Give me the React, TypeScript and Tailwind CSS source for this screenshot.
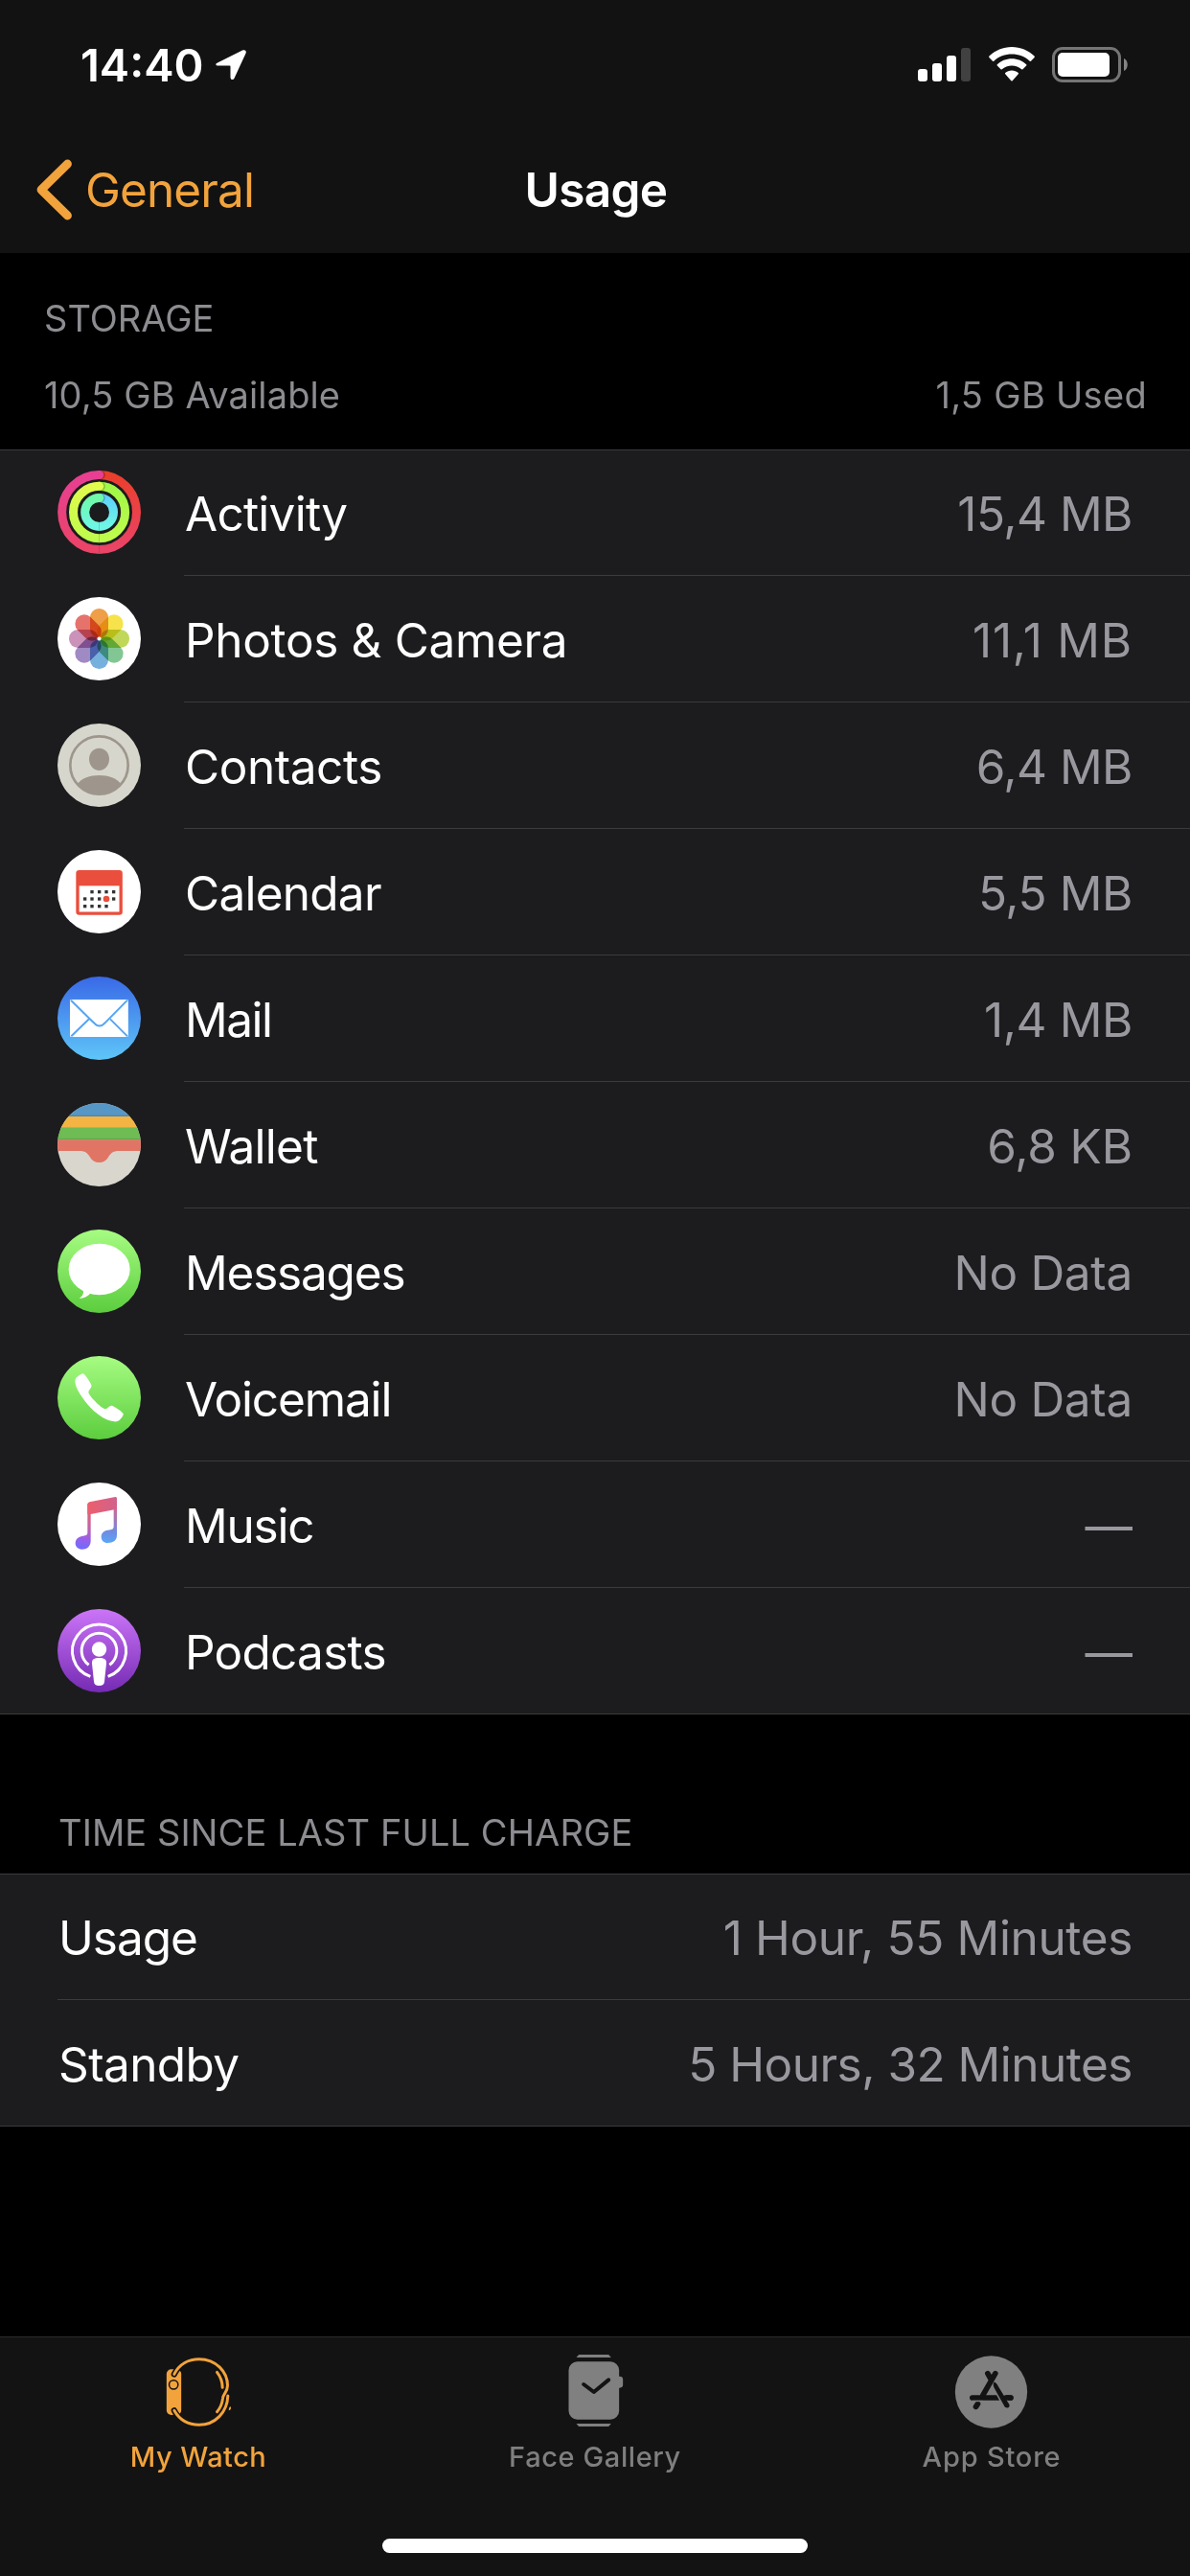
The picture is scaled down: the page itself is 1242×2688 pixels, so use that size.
import type { ReactNode } from "react";

function ActivityIcon() {
  return (
    <svg viewBox="0 0 261 261" className="size-full">
      <defs>
        <linearGradient id="moveR" x1="0" y1="0" x2="0" y2="1">
          <stop offset="0" stopColor="#ea3f2c" />
          <stop offset="1" stopColor="#ea4467" />
        </linearGradient>
        <linearGradient id="moveL" x1="0" y1="0" x2="0" y2="1">
          <stop offset="0" stopColor="#e83f93" />
          <stop offset="1" stopColor="#ea4467" />
        </linearGradient>
        <linearGradient id="exR" x1="0" y1="0" x2="0" y2="1">
          <stop offset="0" stopColor="#a0f747" />
          <stop offset="1" stopColor="#bffb4d" />
        </linearGradient>
        <linearGradient id="exL" x1="0" y1="0" x2="0" y2="1">
          <stop offset="0" stopColor="#e1fa4d" />
          <stop offset="1" stopColor="#bffb4d" />
        </linearGradient>
        <linearGradient id="stR" x1="0" y1="0" x2="0" y2="1">
          <stop offset="0" stopColor="#5fd3f9" />
          <stop offset="1" stopColor="#6ff7e6" />
        </linearGradient>
        <linearGradient id="stL" x1="0" y1="0" x2="0" y2="1">
          <stop offset="0" stopColor="#6ff9a8" />
          <stop offset="1" stopColor="#6ff7e6" />
        </linearGradient>
      </defs>
      <circle cx="130.5" cy="130.5" r="130" fill="#1b1b1d" />
      <g fill="none" strokeWidth="27">
        <path d="M130.5 13.5A117 117 0 0 1 130.5 247.5" stroke="url(#moveR)" />
        <path d="M131 247.5A117 117 0 0 1 131 13.5" stroke="url(#moveL)" />
        <path d="M130.5 49A81.5 81.5 0 0 1 130.5 212" stroke="url(#exR)" />
        <path d="M131 212A81.5 81.5 0 0 1 131 49" stroke="url(#exL)" />
        <path d="M130.5 85.5A45 45 0 0 1 130.5 175.5" stroke="url(#stR)" />
        <path d="M131 175.5A45 45 0 0 1 131 85.5" stroke="url(#stL)" />
      </g>
      <circle cx="136" cy="14" r="13.5" fill="#000" opacity=".25" />
      <circle cx="131" cy="13.5" r="13.5" fill="#e83f93" />
      <circle cx="136" cy="49.5" r="13.5" fill="#000" opacity=".2" />
      <circle cx="131" cy="49" r="13.5" fill="#e1fa4d" />
      <circle cx="136" cy="86" r="13.5" fill="#000" opacity=".2" />
      <circle cx="131" cy="85.5" r="13.5" fill="#6ff9a8" />
    </svg>
  );
}

const petals = ["#ee9f47", "#f6e24a", "#c0d75a", "#82c793", "#76b1de", "#a08ac4", "#cb92ba", "#e5736c"];

function PhotosIcon() {
  return (
    <svg viewBox="0 0 261 261" className="size-full">
      <circle cx="130.5" cy="130.5" r="130.5" fill="#fff" />
      <g className="isolate">
        {petals.map((color, i) => (
          <rect
            key={color}
            x="102"
            y="36"
            width="57"
            height="92"
            rx="28"
            fill={color}
            transform={`rotate(${i * 45} 130.5 130.5)`}
            className="mix-blend-multiply"
          />
        ))}
      </g>
      <circle cx="130.5" cy="130.5" r="6" fill="#fff" />
    </svg>
  );
}

function ContactsIcon() {
  return (
    <svg viewBox="0 0 261 261" className="size-full">
      <clipPath id="contact">
        <circle cx="130.5" cy="130.5" r="92" />
      </clipPath>
      <circle cx="130.5" cy="130.5" r="130.5" fill="#d6d6cc" />
      <circle cx="130.5" cy="130.5" r="90.5" fill="none" stroke="#9e968c" strokeWidth="8" />
      <path
        d="M130.5 77C149 77 162 92 162 111C162 131 148 147 130.5 147C113 147 99 131 99 111C99 92 112 77 130.5 77Z"
        fill="#9e968c"
      />
      <path
        d="M60 192C76 170 102 162 130.5 162C159 162 185 170 201 192V240H60Z"
        fill="#9e968c"
        clipPath="url(#contact)"
      />
    </svg>
  );
}

const calendarDots = [
  [108, 131], [131, 131], [153, 131], [176, 131],
  [86, 153], [108, 153], [131, 153], [176, 153],
  [86, 176], [108, 176], [131, 176], [153, 176],
];

function CalendarIcon() {
  return (
    <svg viewBox="0 0 261 261" className="size-full">
      <circle cx="130.5" cy="130.5" r="130.5" fill="#fff" />
      <rect x="63" y="68" width="135.5" height="130.5" rx="5" fill="none" stroke="#ea4e3d" strokeWidth="10" />
      <rect x="60" y="66" width="141" height="46" fill="#ea4e3d" />
      {calendarDots.map(([x, y]) => (
        <rect key={`${x}-${y}`} x={x - 5} y={y - 5} width="10" height="10" fill="#333" />
      ))}
      <circle cx="153" cy="153" r="10" fill="#ea4e3d" />
    </svg>
  );
}

function MailIcon() {
  return (
    <svg viewBox="0 0 261 261" className="size-full">
      <linearGradient id="mail" x1="0" y1="0" x2="0" y2="1">
        <stop offset="0" stopColor="#3969e7" />
        <stop offset="1" stopColor="#5fc6f8" />
      </linearGradient>
      <circle cx="130.5" cy="130.5" r="130.5" fill="url(#mail)" />
      <rect x="39" y="72" width="182.5" height="117" rx="4" fill="#fff" />
      <g fill="none" stroke="#56a5f2" strokeWidth="6">
        <path d="M42 74L112 143Q131 166 151 143L219 74" />
        <path d="M43 187L99 133M219 187L165 133" />
      </g>
    </svg>
  );
}

function WalletIcon() {
  return (
    <svg viewBox="0 0 261 261" className="size-full">
      <clipPath id="wallet">
        <circle cx="130.5" cy="130.5" r="130.5" />
      </clipPath>
      <g clipPath="url(#wallet)">
        <rect width="261" height="261" fill="#d9d6ce" />
        <rect width="261" height="42" fill="#5797c6" />
        <rect y="38" width="261" height="4" fill="#4f87ae" />
        <rect y="42" width="261" height="36" fill="#f3b443" />
        <rect y="75" width="261" height="3" fill="#d9a33c" />
        <rect y="78" width="261" height="37" fill="#6fbb54" />
        <rect y="111" width="261" height="4" fill="#65a64c" />
        <path
          d="M0 115H261V150H192C174 150 168 156 160 168C153 180 144 186 130.5 186C117 186 108 180 101 168C93 156 87 150 69 150H0Z"
          fill="#e17565"
        />
      </g>
    </svg>
  );
}

function MessagesIcon() {
  return (
    <svg viewBox="0 0 261 261" className="size-full">
      <linearGradient id="msg" x1="0" y1="0" x2="0" y2="1">
        <stop offset="0" stopColor="#a6fc82" />
        <stop offset="1" stopColor="#5ccd3e" />
      </linearGradient>
      <circle cx="130.5" cy="130.5" r="130.5" fill="url(#msg)" />
      <ellipse cx="131" cy="124.5" rx="96" ry="80" fill="#fff" />
      <path d="M80 187C84 200 78 209 68 216C82 216 94 210 104 199Z" fill="#fff" />
    </svg>
  );
}

function VoicemailIcon() {
  return (
    <svg viewBox="0 0 261 261" className="size-full">
      <linearGradient id="phone" x1="0" y1="0" x2="0" y2="1">
        <stop offset="0" stopColor="#a6fc82" />
        <stop offset="1" stopColor="#5ccd3e" />
      </linearGradient>
      <circle cx="130.5" cy="130.5" r="130.5" fill="url(#phone)" />
      <path
        d="M60 67C66 61 73 57 79 55C85 55 101 80 106 90C109 100 97 105 97 114C100 126 134 160 147 165C157 167 161 154 171 155C182 160 201 173 206 180C208 186 196 202 186 205C160 207 128 187 104 162C80 135 57 104 55 80C55 74 57 70 60 67Z"
        fill="#fff"
      />
    </svg>
  );
}

function MusicIcon() {
  return (
    <svg viewBox="0 0 261 261" className="size-full">
      <linearGradient id="noteL" gradientUnits="userSpaceOnUse" x1="110" y1="60" x2="80" y2="209">
        <stop offset="0" stopColor="#ec5f6c" />
        <stop offset="0.45" stopColor="#cf6294" />
        <stop offset="0.78" stopColor="#9a5fe8" />
        <stop offset="1" stopColor="#6f6bff" />
      </linearGradient>
      <linearGradient id="noteR" gradientUnits="userSpaceOnUse" x1="175" y1="48" x2="165" y2="189">
        <stop offset="0" stopColor="#e0607c" />
        <stop offset="0.4" stopColor="#b273ac" />
        <stop offset="0.75" stopColor="#6f8ce2" />
        <stop offset="1" stopColor="#5ba5f6" />
      </linearGradient>
      <linearGradient id="beam" x1="0" y1="0" x2="1" y2="0">
        <stop offset="0" stopColor="#ec5f6c" />
        <stop offset="1" stopColor="#d0628c" />
      </linearGradient>
      <circle cx="130.5" cy="130.5" r="130.5" fill="#fff" />
      <path
        d="M94 66H104V182C104 199 93 209 76 209C64 209 56 201 56 190C56 178 64 171 76 168C88 166 94 166 94 157Z"
        fill="url(#noteL)"
      />
      <path
        d="M176 50H186V165C186 181 175 189 157 189C145 189 137 181 137 170C137 158 145 151 157 149C170 147 176 146 176 137Z"
        fill="url(#noteR)"
      />
      <path d="M94 69Q94 63 100 61L181 45Q186 44 186 50V83L104 99H94Z" fill="url(#beam)" />
    </svg>
  );
}

function PodcastsIcon() {
  return (
    <svg viewBox="0 0 261 261" className="size-full">
      <linearGradient id="pod" x1="0" y1="0" x2="0" y2="1">
        <stop offset="0" stopColor="#cb75f8" />
        <stop offset="1" stopColor="#752bb3" />
      </linearGradient>
      <circle cx="130.5" cy="130.5" r="130.5" fill="url(#pod)" />
      <g fill="none" stroke="#fff" strokeWidth="9">
        <path d="M103 211A84 84 0 1 1 158 211" />
        <path d="M98 175A55 55 0 1 1 163 175" />
      </g>
      <circle cx="130.5" cy="126" r="23" fill="#fff" />
      <path
        d="M130.5 153C146 153 154 158 153 170L147 227C146 236 141 240 130.5 240C120 240 115 236 114 227L108 170C107 158 115 153 130.5 153Z"
        fill="#fff"
      />
    </svg>
  );
}

function WatchTabIcon() {
  return (
    <svg viewBox="208.5 81 225 231" className="h-[77px] w-[75px]" fill="none" strokeLinecap="round">
      <rect x="220" y="127" width="46" height="143" rx="15" fill="#f2a33c" />
      <circle cx="242" cy="175" r="14" stroke="#131313" strokeWidth="4.5" />
      <g stroke="#131313" strokeWidth="19">
        <path d="M244 142C248 134 252 128 257 122" />
        <path d="M244 256C248 264 252 270 257 275" />
      </g>
      <g stroke="#f2a33c" strokeWidth="9">
        <path d="M244 142C260 110 290 95 322 95C375 95 411 135 411 178C411 198 397 204 396 218C394 236 388 249 378 260" />
        <path d="M244 256C262 288 290 301 322 301C372 301 410 262 412 210" />
        <path d="M378 136C389 150 395 167 395 184" />
      </g>
      <path d="M415 256C414 250 417 244 421 244C423 249 421 255 415 256Z" fill="#f2a33c" />
    </svg>
  );
}

function FaceTabIcon() {
  return (
    <svg viewBox="250.5 81 225 231" className="h-[77px] w-[75px]" fill="#808080">
      <path d="M303 90L311 81H404L412 90Z" />
      <path d="M303 297H412L404 306H311Z" />
      <rect x="279" y="103" width="158" height="181" rx="27" />
      <rect x="424" y="149" width="25" height="36" rx="10" />
      <path
        d="M326 174L358 198L404 160"
        fill="none"
        stroke="#131313"
        strokeWidth="12"
        strokeLinecap="round"
        strokeLinejoin="round"
      />
    </svg>
  );
}

function StoreTabIcon() {
  return (
    <svg viewBox="232.5 81 225 231" className="h-[77px] w-[75px] overflow-visible" fill="none" strokeLinecap="round">
      <circle cx="342" cy="198" r="113" fill="#808080" />
      <path d="M283 216H403" stroke="#131313" strokeWidth="17" />
      <path d="M353 170L392 244" stroke="#808080" strokeWidth="25" strokeLinecap="butt" />
      <path d="M331 140L341 158M355 140L316 208" stroke="#131313" strokeWidth="17" />
      <path d="M350 168C347 176 349 181 354 190L382 240C388 254 404 246 398 236L364 180C360 172 354 166 350 168Z" fill="#131313" />
      <path d="M388 216H403" stroke="#131313" strokeWidth="17" />
      <path d="M300 235L294 244" stroke="#131313" strokeWidth="17" />
      <path d="M284 226.5H316" stroke="#808080" strokeWidth="4" strokeLinecap="butt" />
    </svg>
  );
}

type Item = {
  name: string;
  value: string;
  icon?: ReactNode;
  nameTracking: string;
  valueTracking: string;
};

const apps: Item[] = [
  { name: "Activity", value: "15,4 MB", icon: <ActivityIcon />, nameTracking: "tracking-[-0.75px]", valueTracking: "tracking-[-0.5px]" },
  { name: "Photos & Camera", value: "11,1 MB", icon: <PhotosIcon />, nameTracking: "tracking-[-0.35px]", valueTracking: "tracking-[0.8px]" },
  { name: "Contacts", value: "6,4 MB", icon: <ContactsIcon />, nameTracking: "tracking-[-0.45px]", valueTracking: "tracking-[-0.5px]" },
  { name: "Calendar", value: "5,5 MB", icon: <CalendarIcon />, nameTracking: "tracking-[-0.75px]", valueTracking: "tracking-[-0.4px]" },
  { name: "Mail", value: "1,4 MB", icon: <MailIcon />, nameTracking: "tracking-[-1.5px]", valueTracking: "tracking-[-0.4px]" },
  { name: "Wallet", value: "6,8 KB", icon: <WalletIcon />, nameTracking: "tracking-[-0.75px]", valueTracking: "tracking-[-0.1px]" },
  { name: "Messages", value: "No Data", icon: <MessagesIcon />, nameTracking: "tracking-[-1.2px]", valueTracking: "tracking-[-0.3px]" },
  { name: "Voicemail", value: "No Data", icon: <VoicemailIcon />, nameTracking: "tracking-[-1.15px]", valueTracking: "tracking-[-0.3px]" },
  { name: "Music", value: "—", icon: <MusicIcon />, nameTracking: "tracking-[-1.2px]", valueTracking: "tracking-normal" },
  { name: "Podcasts", value: "—", icon: <PodcastsIcon />, nameTracking: "tracking-[-0.75px]", valueTracking: "tracking-normal" },
];

const charge: Item[] = [
  { name: "Usage", value: "1 Hour, 55 Minutes", nameTracking: "tracking-[-1px]", valueTracking: "tracking-[-0.35px]" },
  { name: "Standby", value: "5 Hours, 32 Minutes", nameTracking: "tracking-[-0.6px]", valueTracking: "tracking-[-0.5px]" },
];

function Row({ name, value, icon, nameTracking, valueTracking }: Item) {
  return (
    <div className="group flex h-[132px] items-stretch first:h-[131px] last:h-[131px]">
      {icon && (
        <div className="flex w-[132px] shrink-0 items-end pb-[23px] group-last:pb-[22px]">
          <div className="size-[87px]">{icon}</div>
        </div>
      )}
      <div className="flex flex-1 items-end justify-between border-b border-[#3b3b3e] pr-[60px] pb-[22px] pl-px text-[49.5px] leading-[84px] group-last:border-b-0">
        <span className={nameTracking}>{name}</span>
        <span className={`text-[#98989e] ${valueTracking}`}>{value}</span>
      </div>
    </div>
  );
}

export default function App() {
  return (
    <div className="flex h-[2688px] w-[1242px] flex-col overflow-hidden bg-black font-['Inter',sans-serif] text-white">
      <header className="h-[264px] shrink-0 bg-[#121212]">
        <div className="flex h-[132px] items-start justify-between pt-[48px] pr-[64px] pl-[84px]">
          <div className="flex items-start gap-[13px]">
            <span className="text-[47px] leading-[40px] font-semibold">14:40</span>
            <svg viewBox="0 0 32 32" className="mt-[4px] size-[32px]" fill="#fff">
              <path d="M2 13.5L28 .6C30.5-.5 32.5 1 31.6 3.5L19.6 29.5C18.4 32 15.5 31.5 15.5 28.5V17.5C15.5 16.8 15.2 16.5 14.5 16.5H3C0 16.5-.7 14.7 2 13.5Z" />
            </svg>
          </div>
          <div className="flex items-start">
            <svg viewBox="0 0 55 35" className="mt-[2px] h-[35px] w-[55px]" fill="#fff">
              <rect y="22" width="10" height="13" rx="3" />
              <rect x="15" y="16" width="10" height="19" rx="3" />
              <rect x="30" y="8" width="10" height="27" rx="3" />
              <rect x="45" width="10" height="35" rx="3" fill="#414141" />
            </svg>
            <svg viewBox="0 0 48 36" className="mt-[1px] ml-[19px] h-[36px] w-[48px]" fill="#fff">
              <path d="M24 0C33 0 41.5 3.6 47.6 9.6C48 10 48 10.5 47.6 11L44 14.7C43.6 15.1 43.1 15.1 42.7 14.7C37.7 10 31 7.5 24 7.5C17 7.5 10.3 10 5.3 14.7C4.9 15.1 4.4 15.1 4 14.7L.4 11C0 10.5 0 10 .4 9.6C6.5 3.6 15 0 24 0Z" />
              <path d="M24 12.3C29.9 12.3 35.3 14.6 39.2 18.3C39.6 18.7 39.6 19.2 39.2 19.6L35.5 23.3C35.1 23.7 34.6 23.7 34.2 23.3C31.5 20.9 27.9 19.5 24 19.5C20.1 19.5 16.5 20.9 13.8 23.3C13.4 23.7 12.9 23.7 12.5 23.3L8.8 19.6C8.4 19.2 8.4 18.7 8.8 18.3C12.7 14.6 18.1 12.3 24 12.3Z" />
              <path d="M24 24.5C26.6 24.5 29 25.5 30.8 27C31.2 27.4 31.2 27.9 30.8 28.3L24.7 35.2C24.3 35.6 23.7 35.6 23.3 35.2L17.2 28.3C16.8 27.9 16.8 27.4 17.2 27C19 25.5 21.4 24.5 24 24.5Z" />
            </svg>
            <svg viewBox="0 0 80 37" className="mt-[1px] ml-[18px] h-[37px] w-[80px]">
              <rect x="1.5" y="1.5" width="69" height="34" rx="9.5" fill="none" stroke="#757575" strokeWidth="3" />
              <rect x="6" y="6" width="54" height="25" rx="5" fill="#fff" />
              <path d="M75 12C80 14 80 23 75 25Z" fill="#858585" />
            </svg>
          </div>
        </div>
        <div className="grid h-[132px] grid-cols-3 items-center text-[49.5px] leading-[60px]">
          <div className="flex items-center pl-[38px] text-[#f2a33c]">
            <svg viewBox="0 0 38 64" className="h-[64px] w-[38px]" fill="none">
              <path d="M32.5 5L5 32L32.5 59" stroke="currentColor" strokeWidth="8.8" strokeLinecap="round" strokeLinejoin="round" />
            </svg>
            <span className="ml-[13px] tracking-[-0.9px]">General</span>
          </div>
          <h1 className="pl-[2px] text-center font-semibold tracking-[-0.7px]">Usage</h1>
        </div>
      </header>

      <section className="h-[205px] shrink-0 pr-[45px] pl-[46px] text-[38px] leading-[46px] text-[#8c8c91]">
        <h2 className="pt-[45px]">STORAGE</h2>
        <div className="mt-[34px] flex justify-between">
          <span className="tracking-[0.12px]">10,5 GB Available</span>
          <span className="tracking-[0.3px]">1,5 GB Used</span>
        </div>
      </section>

      <section className="border-y border-[#3b3b3e] bg-[#1c1c1e] pl-[60px]">
        {apps.map((app) => (
          <Row key={app.name} {...app} />
        ))}
      </section>

      <h2 className="h-[166px] shrink-0 pt-[100px] pl-[61px] text-[38px] leading-[46px] tracking-[0.1px] text-[#8c8c91]">
        TIME SINCE LAST FULL CHARGE
      </h2>

      <section className="border-y border-[#3b3b3e] bg-[#1c1c1e] pl-[60px]">
        {charge.map((item) => (
          <Row key={item.name} {...item} />
        ))}
      </section>

      <nav className="mt-auto flex h-[250px] shrink-0 flex-col items-center border-t border-[#2b2b2c] bg-[#131313]">
        <div className="grid w-full grid-cols-3 pt-[18px] text-[29px] leading-[36px] font-medium text-[#7f7f7f]">
          <div className="flex flex-col items-center gap-[12px] text-[#f2a33c]">
            <WatchTabIcon />
            <span className="tracking-[0.45px]">My Watch</span>
          </div>
          <div className="flex flex-col items-center gap-[12px]">
            <FaceTabIcon />
            <span className="tracking-[0.6px]">Face Gallery</span>
          </div>
          <div className="flex flex-col items-center gap-[12px]">
            <StoreTabIcon />
            <span className="tracking-[0.8px]">App Store</span>
          </div>
        </div>
        <div className="mt-auto mb-[24px] h-[15px] w-[444px] rounded-full bg-white" />
      </nav>
    </div>
  );
}
